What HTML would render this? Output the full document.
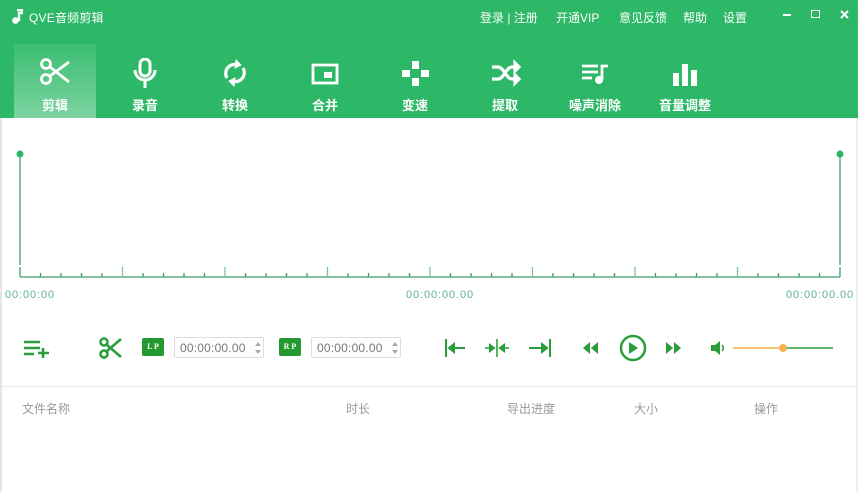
<!DOCTYPE html>
<html><head><meta charset="utf-8"><style>
*{margin:0;padding:0;box-sizing:border-box}
body{width:858px;height:492px;overflow:hidden;background:#fff;font-family:"Liberation Sans","Noto Sans CJK SC",sans-serif;position:relative}
.hdr{position:absolute;left:0;top:0;width:858px;height:118px;background:#2cb866}
.t{position:absolute;color:#fff;font-size:12px;white-space:nowrap}
.tool{position:absolute;top:44px;width:82px;height:74px;text-align:center}
.tool svg{position:absolute;left:25px;top:14px}
.tool span{position:absolute;left:0;right:0;top:51px;color:#fff;font-size:13px;font-weight:bold}
.act{background:linear-gradient(to bottom,rgba(255,255,255,0.08),rgba(255,255,255,0.38))}
.g{position:absolute;color:#5bb388;font-size:11px;font-family:"Liberation Sans",sans-serif;letter-spacing:0.9px}
.box{position:absolute;top:337px;height:21px;border:1px solid #ddd;border-radius:2px;font-size:12px;color:#777;padding:3px 0 0 5px;letter-spacing:0.2px}
.badge{position:absolute;top:338px;width:22px;height:18px;background:#23992f;color:#fff;font-size:8px;font-weight:bold;text-align:center;line-height:18px;font-family:"Liberation Serif",serif;border-radius:2px}
.th{position:absolute;top:400px;font-size:12px;color:#999}
</style></head><body>
<div class="hdr"></div>
<svg style="position:absolute;left:11px;top:9px" width="12" height="15" viewBox="0 0 12 15"><path d="M6 1h5v3H8v8" stroke="#fff" stroke-width="2.4" fill="none"/><circle cx="4.5" cy="11.5" r="3.3" fill="#fff"/></svg>
<div class="t" style="left:29px;top:9px;letter-spacing:0.2px">QVE音频剪辑</div>
<div class="t" style="left:480px;top:9px">登录 | 注册</div>
<div class="t" style="left:556px;top:9px">开通VIP</div>
<div class="t" style="left:619px;top:9px">意见反馈</div>
<div class="t" style="left:683px;top:9px">帮助</div>
<div class="t" style="left:723px;top:9px">设置</div>
<div style="position:absolute;left:783px;top:14px;width:8px;height:2px;background:#fff"></div>
<div style="position:absolute;left:811px;top:10px;width:9px;height:8px;border:1.5px solid #fff"></div>
<svg style="position:absolute;left:840px;top:10px" width="9" height="9"><path d="M1 1L8 8M8 1L1 8" stroke="#fff" stroke-width="2"/></svg>

<div class="tool act" style="left:14px"><svg width="32" height="28" viewBox="0 0 32 28" fill="none" stroke="#fff" stroke-width="2.8"><circle cx="7" cy="6" r="4.5"/><circle cx="7" cy="21" r="4.5"/><path d="M11 9L30 24M11 18L30 4"/></svg><span>剪辑</span></div>
<div class="tool" style="left:104px"><svg width="32" height="30" viewBox="0 0 32 30" fill="none" stroke="#fff" stroke-width="3"><rect x="11" y="1" width="10" height="17" rx="5"/><path d="M6 12a10 10 0 0 0 20 0M16 22v8"/></svg><span>录音</span></div>
<div class="tool" style="left:194px"><svg width="32" height="30" viewBox="0 0 32 30" fill="none" stroke="#fff" stroke-width="3.2"><path d="M8 20A9 9 0 0 1 19 7M24 10A9 9 0 0 1 13 23"/><path d="M17 2l5 5-6 3z M15 28l-5-5 6-3z" fill="#fff" stroke-width="1"/></svg><span>转换</span></div>
<div class="tool" style="left:284px"><svg width="32" height="30" viewBox="0 0 32 30" fill="none" stroke="#fff" stroke-width="2.8"><rect x="4" y="7" width="24" height="18"/><rect x="15" y="14" width="8" height="6" fill="#fff" stroke="none"/></svg><span>合并</span></div>
<div class="tool" style="left:374px"><svg width="32" height="30" viewBox="0 0 32 30" fill="#fff"><rect x="13" y="3" width="7" height="8"/><rect x="3" y="12" width="8" height="7"/><rect x="22" y="12" width="8" height="7"/><rect x="13" y="20" width="7" height="8"/></svg><span>变速</span></div>
<div class="tool" style="left:464px"><svg width="32" height="30" viewBox="0 0 32 30" fill="none" stroke="#fff" stroke-width="3.2"><path d="M3 9h6c6 0 8 12 14 12h5M3 21h6c6 0 8-12 14-12h5"/><path d="M26 5l4 4-4 4zM26 17l4 4-4 4z" fill="#fff"/></svg><span>提取</span></div>
<div class="tool" style="left:554px"><svg width="32" height="30" viewBox="0 0 32 30" fill="none" stroke="#fff" stroke-width="2.8"><path d="M3 8h16M3 14h16M3 20h10M23 22V8h6"/><circle cx="20" cy="22" r="4" fill="#fff" stroke="none"/></svg><span>噪声消除</span></div>
<div class="tool" style="left:644px"><svg width="32" height="30" viewBox="0 0 32 30" fill="#fff"><rect x="4" y="15" width="6" height="13"/><rect x="13" y="6" width="6" height="22"/><rect x="22" y="12" width="6" height="16"/></svg><span>音量调整</span></div>

<div style="position:absolute;left:0;top:118px;width:2px;height:374px;background:#e6e6e6"></div>
<div style="position:absolute;left:856px;top:118px;width:2px;height:374px;background:#eee"></div>

<svg style="position:absolute;left:0;top:140px" width="858" height="150">
<g stroke="#3b9e6a" stroke-width="1.3" fill="none">
<path d="M20 15V125M840 15V125M20 137H840M20 127v10M840 127v10"/>
<path d="M40.5 133v4M61 133v4M81.5 133v4M102 133v4M143 133v4M163.5 133v4M184 133v4M204.5 133v4M245.5 133v4M266 133v4M286.5 133v4M307 133v4M348 133v4M368.5 133v4M389 133v4M409.5 133v4M450.5 133v4M471 133v4M491.5 133v4M512 133v4M553 133v4M573.5 133v4M594 133v4M614.5 133v4M655.5 133v4M676 133v4M696.5 133v4M717 133v4M758 133v4M778.5 133v4M799 133v4M819.5 133v4"/>
<path d="M122.5 127v10M225 127v10M327.5 127v10M430 127v10M532.5 127v10M635 127v10M737.5 127v10" stroke="#7fc29d"/>
</g>
<circle cx="20" cy="14" r="3.5" fill="#2cb866"/><circle cx="840" cy="14" r="3.5" fill="#2cb866"/>
</svg>
<div class="g" style="left:5px;top:289px">00:00:00</div>
<div class="g" style="left:406px;top:289px">00:00:00.00</div>
<div class="g" style="left:786px;top:289px">00:00:00.00</div>

<svg style="position:absolute;left:22px;top:339px" width="30" height="20" fill="none" stroke="#2a9e3a" stroke-width="2.6"><path d="M2 3h16M2 9h16M2 15h10M21 9v10M16 14h11"/></svg>
<svg style="position:absolute;left:99px;top:337px" width="24" height="22" fill="none" stroke="#2a9e3a" stroke-width="2.6"><circle cx="5" cy="5" r="3.5"/><circle cx="5" cy="17" r="3.5"/><path d="M8 8L22 20M8 14L22 2"/></svg>
<div class="badge" style="left:142px">L P</div>
<div class="box" style="left:174px;width:90px">00:00:00.00</div>
<div class="badge" style="left:279px">R P</div>
<div class="box" style="left:311px;width:90px">00:00:00.00</div>
<svg style="position:absolute;left:254px;top:341px" width="8" height="14" fill="#aaa"><path d="M1 5L4 1 7 5zM1 9l3 4 3-4z"/></svg>
<svg style="position:absolute;left:391px;top:341px" width="8" height="14" fill="#aaa"><path d="M1 5L4 1 7 5zM1 9l3 4 3-4z"/></svg>

<svg style="position:absolute;left:440px;top:335px" width="120" height="26" fill="#2a9e3a" stroke="#2a9e3a" stroke-width="2">
<path d="M6 4v18M9 13h16" fill="none"/><path d="M9 13l5-4v8z"/>
<path d="M57 4v18M45 13h8M61 13h8" fill="none" stroke-width="1.6"/><path d="M54 13l-4-3v6zM60 13l4-3v6z"/>
<path d="M110 4v18M89 13h14" fill="none"/><path d="M107 13l-5-4v8z"/>
</svg>
<svg style="position:absolute;left:580px;top:332px" width="110" height="32">
<path d="M3 16l7-6v12zM11 16l7-6v12z" fill="#2a9e3a"/>
<circle cx="53" cy="16" r="12" fill="none" stroke="#2a9e3a" stroke-width="2.5"/><path d="M49 10l9 6-9 6z" fill="#2a9e3a"/>
<path d="M86 10l7 6-7 6zM94 10l7 6-7 6z" fill="#2a9e3a"/>
</svg>
<svg style="position:absolute;left:708px;top:338px" width="130" height="20">
<path d="M3 7h4l5-4v14l-5-4H3z" fill="#2a9e3a"/><path d="M14 7a4 4 0 0 1 0 6" stroke="#2a9e3a" stroke-width="1.5" fill="none"/>
<path d="M25 10H75" stroke="#f5b24a" stroke-width="1.5"/><path d="M75 10H125" stroke="#2a9e3a" stroke-width="1.5"/>
<circle cx="75" cy="10" r="4" fill="#f5b24a"/>
</svg>

<div style="position:absolute;left:2px;top:386px;width:854px;height:1px;background:#e8e8e8"></div>
<div class="th" style="left:22px">文件名称</div>
<div class="th" style="left:346px">时长</div>
<div class="th" style="left:507px">导出进度</div>
<div class="th" style="left:634px">大小</div>
<div class="th" style="left:754px">操作</div>
</body></html>
